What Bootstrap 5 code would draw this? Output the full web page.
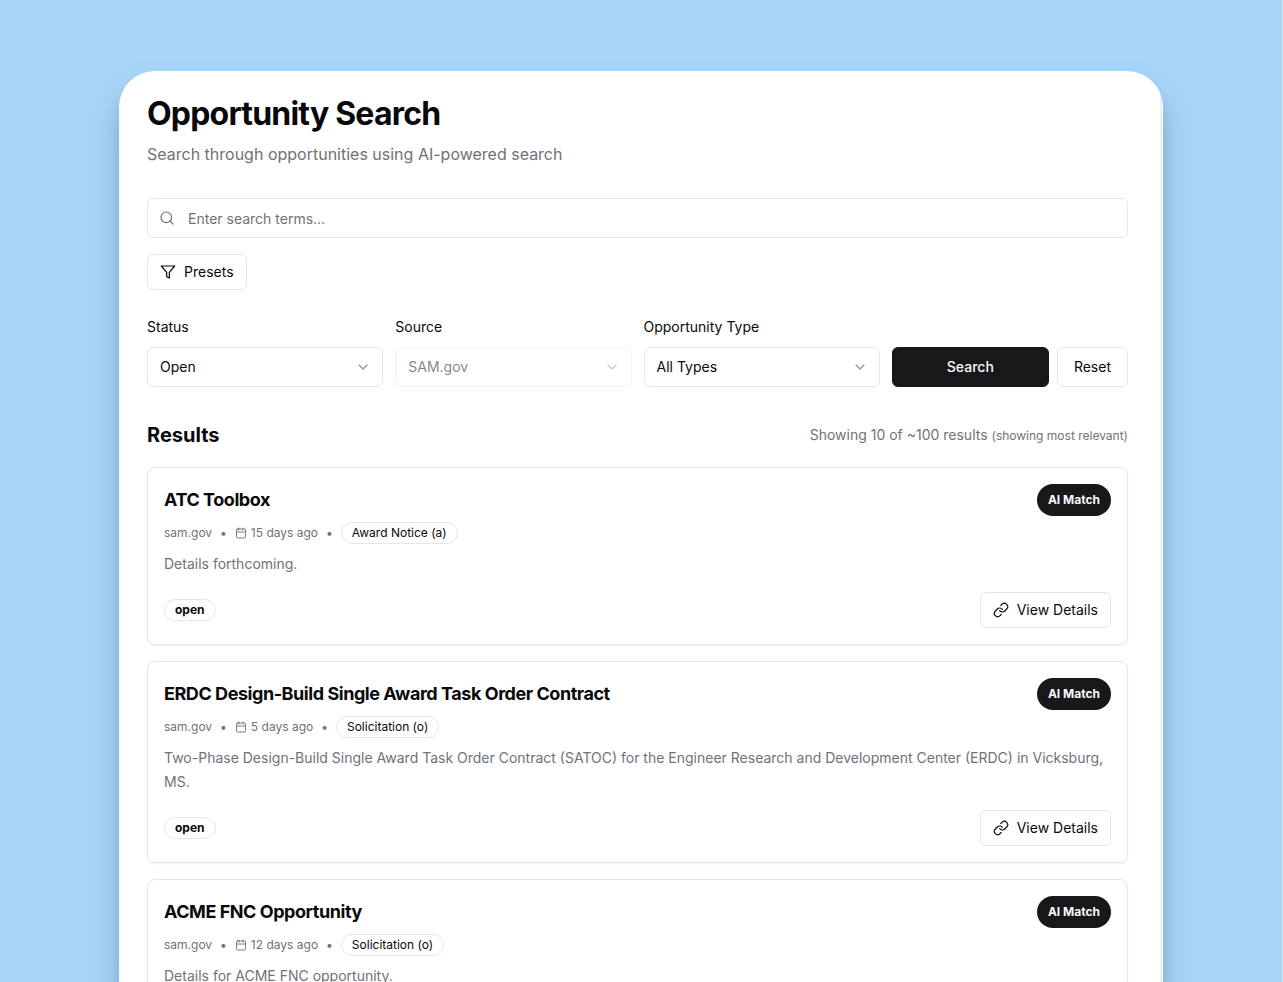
<!DOCTYPE html>
<html lang="en">
<head>
<meta charset="utf-8">
<meta name="viewport" content="width=device-width, initial-scale=1">
<title>Opportunity Search</title>
<link href="https://cdn.jsdelivr.net/npm/bootstrap@5.3.0/dist/css/bootstrap.min.css" rel="stylesheet">
<style>
  :root { --ink: #09090b; --muted: #717179; --line: #e6e6e8; --solid: #18181b; }
  body { font-family: Inter, "Liberation Sans", sans-serif; font-size: 14px; line-height: 20px; color: var(--ink); background: #a8d6f9; }
  .stage { padding: 71px 119px 0; border-right: 1px solid #cbe6fb; }
  .panel-shadow { min-height: 0; border-radius: 36px 36px 0 0; box-shadow: 0 20px 32px rgba(50, 75, 110, .26), 0 14px 14px rgba(50, 75, 110, .14); }
  .panel { background: linear-gradient(#efefef, #efefef) right 1px top / 2px 100% no-repeat #fff; border-radius: 36px 36px 0 0; padding: 23px 35px 24px 28px; overflow-y: auto; scrollbar-width: none; }
  .panel::-webkit-scrollbar { display: none; }
  h1 { font-size: 32px; line-height: 40px; font-weight: 700; letter-spacing: -.025em; }
  .lede { font-size: 16px; line-height: 24px; color: var(--muted); }
  .field { height: 40px; font-size: 14px; line-height: 20px; color: var(--ink); border: 1px solid var(--line); border-radius: 6px; padding: 0 12px; background-color: #fff; }
  .search-field { padding-left: 40px; }
  .search-field::placeholder { color: var(--muted); }
  .search-icon { left: 12px; top: 12px; color: var(--muted); }
  .filters { display: grid; grid-template-columns: repeat(4, 1fr); gap: 12px; margin-top: 27px; }
  .filters label { line-height: 20px; margin-bottom: 10px; }
  .pick { appearance: none; width: 100%; }
  .pick:disabled { color: var(--ink); opacity: 1; }
  .pick-wrap:has(:disabled) { opacity: .5; }
  .pick-arrow { right: 12px; top: 12px; color: #929296; pointer-events: none; }
  .btn { --bs-btn-font-size: 14px; --bs-btn-line-height: 20px; --bs-btn-border-radius: 6px; --bs-btn-font-weight: 400; --bs-btn-padding-x: 12px; --bs-btn-padding-y: 7px; }
  .btn-line { --bs-btn-color: var(--ink); --bs-btn-bg: #fff; --bs-btn-border-color: var(--line); --bs-btn-hover-bg: #f4f4f5; --bs-btn-hover-border-color: var(--line); --bs-btn-active-bg: #f4f4f5; }
  .btn-solid { --bs-btn-font-weight: 500; --bs-btn-color: #fafafa; --bs-btn-bg: var(--solid); --bs-btn-border-color: var(--solid); --bs-btn-hover-color: #fff; --bs-btn-hover-bg: #2c2c30; }
  .btn-tall { --bs-btn-padding-y: 9px; --bs-btn-padding-x: 16px; }
  .muted { color: var(--muted); }
  .fine { font-size: 12px; line-height: 16px; }
  .results { margin-top: 34px; }
  .results-head { margin-bottom: 18px; }
  .results-title { font-size: 20px; line-height: 28px; font-weight: 700; }
  .result { border: 1px solid var(--line); border-radius: 8px; padding: 16px; box-shadow: 0 1px 2px rgba(0, 0, 0, .05); }
  .result-title { font-size: 18px; line-height: 28px; font-weight: 700; letter-spacing: -.025em; }
  .match { background: var(--solid); color: #fafafa; border-radius: 16px; font-size: 12px; line-height: 16px; font-weight: 700; padding: 8px 11px; }
  .tag { border: 1px solid var(--line); border-radius: 11px; font-size: 12px; line-height: 16px; padding: 2px 10px; color: var(--ink); }
  .meta { gap: 8px; margin-top: 6px; }
  .blurb { line-height: 24px; margin: 8px 0 16px; color: var(--muted); }
  svg { fill: none; stroke: currentColor; stroke-width: 1.8; stroke-linecap: round; stroke-linejoin: round; flex: none; }
</style>
</head>
<body>
<svg class="d-none">
  <symbol id="calendar" viewBox="0 0 24 24"><path d="M8 2v4M16 2v4M3 10h18"/><rect x="3" y="4" width="18" height="18" rx="2"/></symbol>
  <symbol id="link" viewBox="0 0 24 24"><path d="M10 13a5 5 0 0 0 7.54.54l3-3a5 5 0 0 0-7.07-7.07l-1.72 1.71"/><path d="M14 11a5 5 0 0 0-7.54-.54l-3 3a5 5 0 0 0 7.07 7.07l1.71-1.71"/></symbol>
  <symbol id="chevron" viewBox="0 0 24 24"><path d="m6 9 6 6 6-6"/></symbol>
</svg>
<div class="stage vh-100 d-flex flex-column overflow-hidden">
  <div class="panel-shadow d-flex flex-grow-1">
  <main class="panel flex-grow-1">
    <header>
      <h1 class="mb-0">Opportunity Search</h1>
      <p class="lede mt-2 mb-0">Search through opportunities using AI-powered search</p>
    </header>

    <form class="mt-4 pt-2">
      <div class="position-relative">
        <svg class="search-icon position-absolute" width="16" height="16" viewBox="0 0 24 24"><circle cx="11" cy="11" r="8"/><path d="m21 21-4.3-4.3"/></svg>
        <input type="text" class="field search-field w-100 d-block" placeholder="Enter search terms..." aria-label="Search terms">
      </div>
      <button type="button" class="btn btn-line d-inline-flex align-items-center gap-2 mt-3">
        <svg width="16" height="16" viewBox="0 0 24 24"><path d="M22 3H2l8 9.46V19l4 2v-8.54L22 3z"/></svg>Presets
      </button>
      <div class="filters align-items-end">
        <div>
          <label for="status" class="d-block">Status</label>
          <div class="pick-wrap position-relative">
            <select id="status" class="field pick d-block"><option>Open</option></select>
            <svg class="pick-arrow position-absolute" width="16" height="16"><use href="#chevron"/></svg>
          </div>
        </div>
        <div>
          <label for="source" class="d-block">Source</label>
          <div class="pick-wrap position-relative">
            <select id="source" class="field pick d-block" disabled><option>SAM.gov</option></select>
            <svg class="pick-arrow position-absolute" width="16" height="16"><use href="#chevron"/></svg>
          </div>
        </div>
        <div>
          <label for="type" class="d-block">Opportunity Type</label>
          <div class="pick-wrap position-relative">
            <select id="type" class="field pick d-block"><option>All Types</option></select>
            <svg class="pick-arrow position-absolute" width="16" height="16"><use href="#chevron"/></svg>
          </div>
        </div>
        <div class="d-flex gap-2">
          <button type="submit" class="btn btn-solid btn-tall flex-grow-1">Search</button>
          <button type="reset" class="btn btn-line btn-tall">Reset</button>
        </div>
      </div>
    </form>

    <section class="results">
      <div class="results-head d-flex justify-content-between align-items-center">
        <h2 class="results-title mb-0">Results</h2>
        <span class="muted">Showing 10 of ~100 results <span class="fine">(showing most relevant)</span></span>
      </div>
      <div class="d-flex flex-column gap-3">
        <article class="result">
          <div class="d-flex justify-content-between align-items-center">
            <h3 class="result-title mb-0">ATC Toolbox</h3><span class="match">AI Match</span>
          </div>
          <div class="meta muted fine d-flex align-items-center">
            <span>sam.gov</span><span>•</span>
            <span class="d-flex align-items-center gap-1"><svg width="12" height="12"><use href="#calendar"/></svg>15 days ago</span><span>•</span>
            <span class="tag">Award Notice (a)</span>
          </div>
          <p class="blurb">Details forthcoming.</p>
          <div class="d-flex justify-content-between align-items-center">
            <span class="tag fw-bold">open</span>
            <button type="button" class="btn btn-line d-inline-flex align-items-center gap-2"><svg width="16" height="16"><use href="#link"/></svg>View Details</button>
          </div>
        </article>
        <article class="result">
          <div class="d-flex justify-content-between align-items-center">
            <h3 class="result-title mb-0">ERDC Design-Build Single Award Task Order Contract</h3><span class="match">AI Match</span>
          </div>
          <div class="meta muted fine d-flex align-items-center">
            <span>sam.gov</span><span>•</span>
            <span class="d-flex align-items-center gap-1"><svg width="12" height="12"><use href="#calendar"/></svg>5 days ago</span><span>•</span>
            <span class="tag">Solicitation (o)</span>
          </div>
          <p class="blurb">Two-Phase Design-Build Single Award Task Order Contract (SATOC) for the Engineer Research and Development Center (ERDC) in Vicksburg, MS.</p>
          <div class="d-flex justify-content-between align-items-center">
            <span class="tag fw-bold">open</span>
            <button type="button" class="btn btn-line d-inline-flex align-items-center gap-2"><svg width="16" height="16"><use href="#link"/></svg>View Details</button>
          </div>
        </article>
        <article class="result">
          <div class="d-flex justify-content-between align-items-center">
            <h3 class="result-title mb-0">ACME FNC Opportunity</h3><span class="match">AI Match</span>
          </div>
          <div class="meta muted fine d-flex align-items-center">
            <span>sam.gov</span><span>•</span>
            <span class="d-flex align-items-center gap-1"><svg width="12" height="12"><use href="#calendar"/></svg>12 days ago</span><span>•</span>
            <span class="tag">Solicitation (o)</span>
          </div>
          <p class="blurb">Details for ACME FNC opportunity.</p>
        </article>
      </div>
    </section>
  </main>
  </div>
</div>
<script src="https://cdn.jsdelivr.net/npm/bootstrap@5.3.0/dist/js/bootstrap.bundle.min.js"></script>
</body>
</html>
